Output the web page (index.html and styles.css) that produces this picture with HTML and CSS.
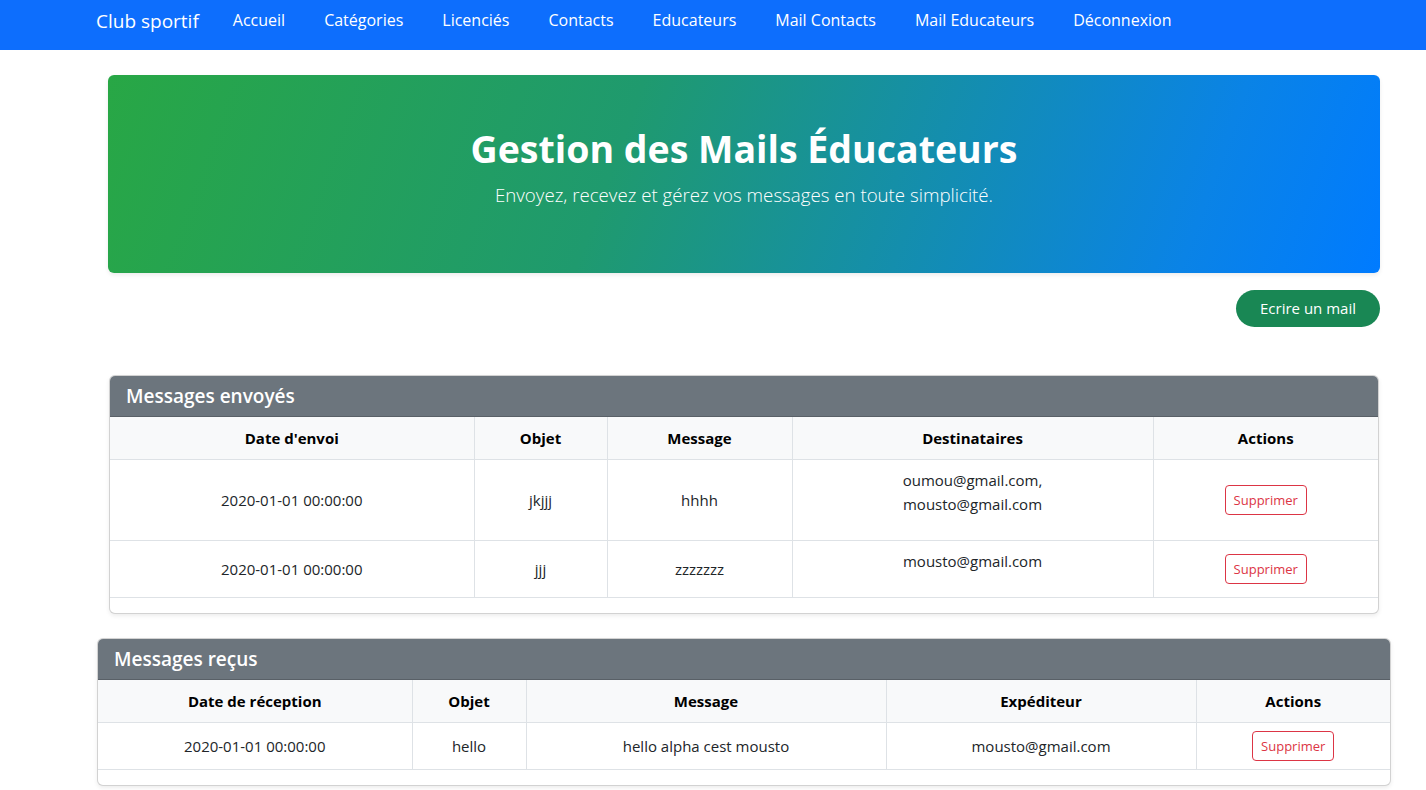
FILE: index.html
```html
<!DOCTYPE html>
<html lang="fr">
<head>
<meta charset="utf-8">
<title>Gestion des Mails Éducateurs</title>
<link rel="stylesheet" href="styles.css">
</head>
<body>
<nav class="navbar">
  <a class="brand" href="#">Club sportif</a>
  <ul class="nav-links">
    <li><a href="#">Accueil</a></li>
    <li><a href="#">Catégories</a></li>
    <li><a href="#">Licenciés</a></li>
    <li><a href="#">Contacts</a></li>
    <li><a href="#">Educateurs</a></li>
    <li><a href="#">Mail Contacts</a></li>
    <li><a href="#">Mail Educateurs</a></li>
    <li><a href="#">Déconnexion</a></li>
  </ul>
</nav>

<main class="page">
  <section class="hero">
    <h1>Gestion des Mails Éducateurs</h1>
    <p>Envoyez, recevez et gérez vos messages en toute simplicité.</p>
  </section>

  <div class="actions-bar">
    <a class="btn-write" href="#">Ecrire un mail</a>
  </div>

  <section class="card card-sent">
    <h5 class="card-header">Messages envoyés</h5>
    <table class="table table-sent">
      <thead>
        <tr>
          <th class="c-date">Date d'envoi</th>
          <th class="c-obj">Objet</th>
          <th class="c-msg">Message</th>
          <th class="c-dest">Destinataires</th>
          <th class="c-act">Actions</th>
        </tr>
      </thead>
      <tbody>
        <tr>
          <td>2020-01-01 00:00:00</td>
          <td>jkjjj</td>
          <td>hhhh</td>
          <td class="dest">oumou@gmail.com,<br>mousto@gmail.com</td>
          <td><button class="btn-del">Supprimer</button></td>
        </tr>
        <tr>
          <td>2020-01-01 00:00:00</td>
          <td>jjj</td>
          <td>zzzzzzz</td>
          <td class="dest">mousto@gmail.com</td>
          <td><button class="btn-del">Supprimer</button></td>
        </tr>
      </tbody>
    </table>
  </section>

  <section class="card card-received">
    <h5 class="card-header">Messages reçus</h5>
    <table class="table table-received">
      <thead>
        <tr>
          <th class="r-date">Date de réception</th>
          <th class="r-obj">Objet</th>
          <th class="r-msg">Message</th>
          <th class="r-exp">Expéditeur</th>
          <th class="r-act">Actions</th>
        </tr>
      </thead>
      <tbody>
        <tr>
          <td>2020-01-01 00:00:00</td>
          <td>hello</td>
          <td>hello alpha cest mousto</td>
          <td>mousto@gmail.com</td>
          <td><button class="btn-del">Supprimer</button></td>
        </tr>
      </tbody>
    </table>
  </section>
</main>
</body>
</html>
```

FILE: styles.css
```css
* { box-sizing: border-box; }

html, body {
  margin: 0;
  padding: 0;
  background: #fff;
  color: #212529;
  font-family: "Open Sans", "Noto Sans", "Liberation Sans", sans-serif;
  font-size: 16px;
  line-height: 1.5;
}

a { text-decoration: none; color: inherit; }

/* Navbar */
.navbar {
  height: 50px;
  background: #0d6efd;
  display: flex;
  align-items: flex-start;
  padding: 8px 0 0 96px;
}

.brand {
  color: #fff;
  font-size: 19px;
  line-height: 26px;
  margin-right: 34px;
}

.nav-links {
  list-style: none;
  margin: 0;
  padding: 0;
  display: flex;
  gap: 39px;
}

.nav-links a {
  color: #fff;
  font-size: 16px;
  line-height: 24px;
}

/* Page */
.page {
  padding: 25px 46px 40px 108px;
}

.hero {
  border-radius: 6px;
  background: linear-gradient(110deg, #28a745 0%, #1f9a6e 40%, #0a83e6 85%, #007bff 100%);
  color: #fff;
  text-align: center;
  padding: 50px 20px 47px;
  box-shadow: 0 2px 4px rgba(0,0,0,0.08);
}

.hero h1 {
  margin: 0 0 7px;
  font-size: 37.5px;
  font-weight: 700;
  line-height: 48px;
}

.hero p {
  margin: 0 0 16px;
  font-size: 18.7px;
  font-weight: 300;
  line-height: 30px;
}

.actions-bar {
  display: flex;
  justify-content: flex-end;
  margin-top: 17px;
}

.btn-write {
  display: inline-block;
  background: #198754;
  color: #fff;
  border-radius: 19px;
  padding: 6px 24px;
  font-size: 15px;
  line-height: 25px;
}

/* Cards */
.card {
  border: 1px solid rgba(0,0,0,0.175);
  border-radius: 6px;
  background: #fff;
  box-shadow: 0 2px 4px rgba(0,0,0,0.075);
  overflow: hidden;
  padding-bottom: 16px;
}

.card-sent {
  margin: 48px 1px 0 1px;
  padding-bottom: 15px;
}

.card-received {
  margin: 24px -11px 0 -11px;
  padding-bottom: 15px;
}

.card-header {
  margin: 0;
  background: #6c757d;
  color: #fff;
  font-size: 19px;
  font-weight: 600;
  line-height: 24px;
  padding: 8px 16px;
  border-bottom: 1px solid rgba(0,0,0,0.175);
}

.table {
  width: 100%;
  border-collapse: collapse;
  table-layout: fixed;
  font-size: 15px;
}

.table th,
.table td {
  border: 1px solid #dee2e6;
  padding: 8px;
  text-align: center;
  vertical-align: middle;
  line-height: 24px;
}

.table tr > :first-child { border-left: 0; }
.table tr > :last-child { border-right: 0; }
.table thead tr:first-child th { border-top: 0; }

.table th {
  background: #f8f9fa;
  color: #000;
  font-weight: 700;
  padding: 9px 8px;
}

.table td { color: #212529; }

.table td.dest {
  vertical-align: top;
  padding-bottom: 24px;
}

.c-date { width: 364px; }
.c-obj { width: 133px; }
.c-msg { width: 185px; }
.c-dest { width: 361px; }
.c-act { width: 225px; }

.r-date { width: 314px; }
.r-obj { width: 114px; }
.r-msg { width: 360px; }
.r-exp { width: 310px; }
.r-act { width: 194px; }

.btn-del {
  font-family: inherit;
  font-size: 13px;
  line-height: 20px;
  color: #dc3545;
  background: #fff;
  border: 1px solid #dc3545;
  border-radius: 4px;
  padding: 4px 8px;
  cursor: pointer;
}
```
